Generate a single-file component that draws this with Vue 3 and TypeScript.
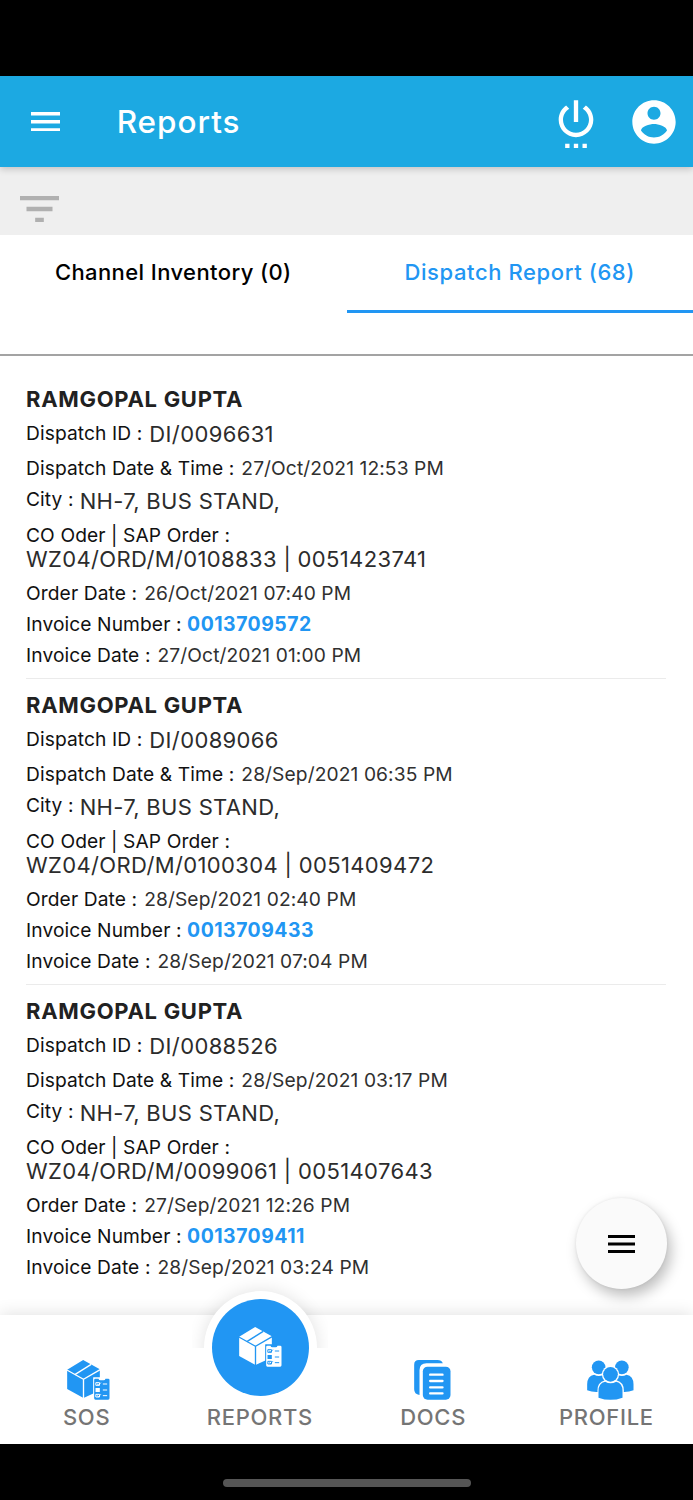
<script setup lang="ts">
interface DispatchRecord {
  name: string
  dispatchId: string
  dispatchedAt: string
  city: string
  orders: string
  orderDate: string
  invoice: string
  invoiceDate: string
}

const records: DispatchRecord[] = [
  {
    name: 'RAMGOPAL GUPTA',
    dispatchId: 'DI/0096631',
    dispatchedAt: '27/Oct/2021 12:53 PM',
    city: 'NH-7, BUS STAND,',
    orders: 'WZ04/ORD/M/0108833 | 0051423741',
    orderDate: '26/Oct/2021 07:40 PM',
    invoice: '0013709572',
    invoiceDate: '27/Oct/2021 01:00 PM',
  },
  {
    name: 'RAMGOPAL GUPTA',
    dispatchId: 'DI/0089066',
    dispatchedAt: '28/Sep/2021 06:35 PM',
    city: 'NH-7, BUS STAND,',
    orders: 'WZ04/ORD/M/0100304 | 0051409472',
    orderDate: '28/Sep/2021 02:40 PM',
    invoice: '0013709433',
    invoiceDate: '28/Sep/2021 07:04 PM',
  },
  {
    name: 'RAMGOPAL GUPTA',
    dispatchId: 'DI/0088526',
    dispatchedAt: '28/Sep/2021 03:17 PM',
    city: 'NH-7, BUS STAND,',
    orders: 'WZ04/ORD/M/0099061 | 0051407643',
    orderDate: '27/Sep/2021 12:26 PM',
    invoice: '0013709411',
    invoiceDate: '28/Sep/2021 03:24 PM',
  },
]

type NavIcon = 'box' | 'docs' | 'people'
interface NavItem {
  label: string
  icon: NavIcon
  active: boolean
}

const navItems: NavItem[] = [
  { label: 'SOS', icon: 'box', active: false },
  { label: 'REPORTS', icon: 'box', active: true },
  { label: 'DOCS', icon: 'docs', active: false },
  { label: 'PROFILE', icon: 'people', active: false },
]
</script>

<template>
  <div class="screen">
    <div class="status-bar"></div>

    <header class="app-bar">
      <svg class="menu-icon" viewBox="0 0 29.2 19.6" aria-hidden="true">
        <path d="M0 0h29.2v3.4H0zM0 8.1h29.2v3.4H0zM0 16.2h29.2v3.4H0z" />
      </svg>
      <h1 class="title">Reports</h1>
      <svg class="bar-icon" viewBox="0 0 24 24" aria-hidden="true">
        <path d="M7 24h2v-2H7v2zm4 0h2v-2h-2v2zm2-22h-2v10h2V2zm3.56 2.44l-1.45 1.45C16.84 6.94 18 8.83 18 11c0 3.31-2.69 6-6 6s-6-2.69-6-6c0-2.17 1.16-4.06 2.88-5.12L7.44 4.44C5.36 5.88 4 8.28 4 11c0 4.42 3.58 8 8 8s8-3.58 8-8c0-2.72-1.36-5.12-3.44-6.56zM15 24h2v-2h-2v2z" />
      </svg>
      <svg class="bar-icon" viewBox="0 0 24 24" aria-hidden="true">
        <path d="M12 2C6.48 2 2 6.48 2 12s4.48 10 10 10 10-4.48 10-10S17.52 2 12 2zm0 3c1.66 0 3 1.34 3 3s-1.34 3-3 3-3-1.34-3-3 1.34-3 3-3zm0 14.2c-2.5 0-4.71-1.28-6-3.22.03-1.99 4-3.08 6-3.08 1.99 0 5.97 1.09 6 3.08-1.29 1.94-3.5 3.22-6 3.22z" />
      </svg>
    </header>

    <div class="filter-bar">
      <svg class="filter-icon" viewBox="0 0 18 12" aria-hidden="true">
        <path d="M7 12h4v-2H7v2zM0 0v2h18V0H0zm3 7h12V5H3v2z" />
      </svg>
    </div>

    <nav class="tabs">
      <div class="tab">Channel Inventory (0)</div>
      <div class="tab selected">Dispatch Report (68)</div>
    </nav>

    <main class="records">
      <article v-for="record in records" :key="record.invoice" class="record">
        <div class="row name">{{ record.name }}</div>
        <div class="row id"><span class="label">Dispatch ID :</span><span class="big">{{ record.dispatchId }}</span></div>
        <div class="row when"><span class="label">Dispatch Date &amp; Time :</span><span class="value">{{ record.dispatchedAt }}</span></div>
        <div class="row city"><span class="label">City :</span><span class="big">{{ record.city }}</span></div>
        <div class="row order-label"><span class="label">CO Oder | SAP Order :</span></div>
        <div class="row orders"><span class="big">{{ record.orders }}</span></div>
        <div class="row order-date"><span class="label">Order Date :</span><span class="value">{{ record.orderDate }}</span></div>
        <div class="row"><span class="label">Invoice Number :</span><a class="invoice">{{ record.invoice }}</a></div>
        <div class="row"><span class="label">Invoice Date :</span><span class="value">{{ record.invoiceDate }}</span></div>
      </article>
    </main>

    <button class="fab" type="button" aria-label="Options">
      <svg class="fab-icon" viewBox="0 0 27 18" aria-hidden="true">
        <path d="M0 0h27v3H0zM0 7.5h27v3H0zM0 15h27v3H0z" />
      </svg>
    </button>

    <footer class="bottom-nav">
      <div v-for="item in navItems" :key="item.label" class="nav-item" :class="{ active: item.active }">
        <div v-if="item.active" class="hump"><div class="hump-circle"></div></div>
        <div v-if="item.active" class="disc"></div>
        <div class="icon-slot">
          <svg v-if="item.icon === 'box'" class="nav-icon box-icon" viewBox="82 58 128 120" aria-hidden="true">
            <path class="fill" d="M130 58l50 28v25h-18v47l-31 14-49-27V87z" />
            <path class="seam" d="M81 88l50 28 50-29M131 116v58" />
            <path class="seam" d="M105 102l49-31" />
            <path class="gap" d="M160 110h52v70h-52z" />
            <path class="fill" d="M167 114h9q1 5 6 5h9q5 0 6-5h8q4 0 4 4v55q0 4-4 4h-38q-4 0-4-4v-55q0-4 4-4z" />
            <path class="gap" d="M167 142h13v12h-13z" />
            <path class="detail" d="M168 126h11v8h-11zM172 130l4 3 7-7M168 161h11v8h-11zM172 165l4 3 7-7M189 130h13M189 148h13M189 165h13" />
          </svg>
          <svg v-else-if="item.icon === 'docs'" class="nav-icon docs-icon" viewBox="72 58 110 120" aria-hidden="true">
            <path class="fill" d="M86 58h56q12 0 16 10h-49q-21 0-21 21v74q-16-2-16-17V72q0-14 14-14z" />
            <rect class="fill" x="98" y="78" width="83" height="99" rx="14" />
            <path class="line" d="M120 102h37M120 121h37M120 140h37M120 158h37" />
          </svg>
          <svg v-else class="nav-icon people-icon" viewBox="110 58 140 120" aria-hidden="true">
            <circle class="fill" cx="144.500" cy="80" r="20.500" />
            <circle class="fill" cx="214" cy="80" r="20.500" />
            <path class="fill" d="M110 149v-18q0-25 21-29 14 8 28 0h42q13 8 27 0 21 4 21 29v18q-15 6-33 5h-74q-17 1-32-5z" />
            <circle class="gap" cx="180" cy="101" r="26" />
            <path class="gap" d="M141 178v-29q0-24 22-30h35q22 6 22 30v29z" />
            <circle class="fill" cx="180" cy="101" r="22" />
            <path class="fill" d="M144 171v-20q0-24 20-28 16 9 33 0 19 4 19 28v20q-36 13-72 0z" />
          </svg>
        </div>
        <span class="nav-label">{{ item.label }}</span>
      </div>
    </footer>

    <div class="gesture-area"><div class="home-indicator"></div></div>
  </div>
</template>

<style>
body {
  margin: 0;
}
</style>

<style scoped>
.screen {
  position: relative;
  display: flex;
  flex-direction: column;
  width: 693px;
  height: 1500px;
  overflow: hidden;
  background: #fff;
  color: #212121;
  font-family: Inter, "Liberation Sans", sans-serif;
  white-space: nowrap;
}

.status-bar {
  flex: none;
  height: 76px;
  background: #000;
}

.app-bar {
  position: relative;
  z-index: 1;
  flex: none;
  display: flex;
  align-items: center;
  box-sizing: border-box;
  height: 91px;
  padding: 0 13px 0 31px;
  background: #1ca9e2;
  box-shadow: 0 2px 7px rgba(0, 0, 0, 0.2);
}

.menu-icon {
  width: 29.2px;
  height: 19.6px;
  fill: #fff;
}

.title {
  flex: 1;
  margin: 0 0 0 56.5px;
  color: #fff;
  font-size: 31.5px;
  font-weight: 500;
  line-height: 40px;
  letter-spacing: 0.95px;
}

.bar-icon {
  width: 52px;
  height: 52px;
  fill: #fff;
}

.bar-icon + .bar-icon {
  margin-left: 26px;
}

.filter-bar {
  flex: none;
  box-sizing: border-box;
  height: 68px;
  padding: 29px 0 0 19.5px;
  background: #efefef;
}

.filter-icon {
  display: block;
  width: 39px;
  height: 26px;
  fill: #b0b0b0;
}

.tabs {
  flex: none;
  display: flex;
  align-items: flex-start;
  box-sizing: border-box;
  height: 121px;
  border-bottom: 2px solid #a3a3a3;
}

.tab {
  flex: 1;
  box-sizing: border-box;
  height: 78px;
  padding-top: 22px;
  border-bottom: 3px solid transparent;
  color: #000;
  font-size: 22px;
  font-weight: 500;
  line-height: 30px;
  letter-spacing: 0.4px;
  text-align: center;
}

.tab.selected {
  border-color: #2196f3;
  color: #2196f3;
  letter-spacing: 0.6px;
}

.records {
  flex: none;
  height: 959px;
  padding: 17px 27px 0 26px;
  box-sizing: border-box;
}

.record {
  box-sizing: border-box;
  height: 306px;
  padding-top: 10px;
  border-bottom: 1px solid #ebebeb;
}

.record:last-child {
  border-bottom-color: transparent;
}

.row {
  display: flex;
  align-items: center;
  height: 31px;
  line-height: 26px;
}

.label {
  margin-right: 7px;
  padding-top: 1px;
  color: #111;
  font-size: 19.2px;
  letter-spacing: 0.1px;
}

.value {
  padding-top: 1px;
  color: #303030;
  font-size: 19.2px;
  letter-spacing: 0.1px;
}

.big {
  color: #2c2c2c;
  font-size: 22px;
  letter-spacing: 0.36px;
}

.invoice {
  margin-left: -1.5px;
  color: #2196f3;
  font-size: 19.4px;
  font-weight: 700;
  letter-spacing: 0.5px;
}

.name {
  height: 32px;
  font-size: 22px;
  font-weight: 700;
  letter-spacing: 0.7px;
}

.id {
  height: 37px;
}

.id .label {
  padding: 0 0 2px;
}

.city .label {
  margin-right: 6px;
  padding: 0 0 4px;
}

.when {
  height: 32px;
}

.when .label,
.when .value {
  padding: 0;
}

.city {
  height: 34px;
}

.city .big {
  letter-spacing: 0.32px;
}

.order-label {
  height: 33px;
}

.orders {
  height: 15px;
}

.order-date {
  margin-top: 11px;
}

.fab {
  position: absolute;
  top: 1198px;
  left: 576px;
  display: flex;
  align-items: center;
  justify-content: center;
  width: 91px;
  height: 91px;
  padding: 0;
  border: 0;
  border-radius: 50%;
  background: #fafafa;
  box-shadow: 4px 7px 14px rgba(0, 0, 0, 0.26), 0 0 3px rgba(0, 0, 0, 0.08);
}

.fab-icon {
  width: 27px;
  height: 18px;
  fill: #000;
}

.bottom-nav {
  position: relative;
  flex: none;
  display: flex;
  height: 129px;
  background: #fff;
  box-shadow: 0 -1px 16px rgba(0, 0, 0, 0.12);
}

.nav-item {
  position: relative;
  flex: 1;
  display: flex;
  flex-direction: column;
  align-items: center;
}

.hump {
  position: absolute;
  top: -44px;
  left: 50%;
  width: 136px;
  height: 77px;
  margin-left: -67.5px;
  overflow: hidden;
}

.hump-circle {
  width: 113px;
  height: 113px;
  margin: 20px auto 0;
  border-radius: 50%;
  background: #fff;
  box-shadow: 0 0 18px rgba(0, 0, 0, 0.12);
}

.disc {
  position: absolute;
  top: -16px;
  left: 50%;
  width: 97px;
  height: 97px;
  margin-left: -48.2px;
  border-radius: 50%;
  background: #2196f3;
}

.icon-slot {
  position: relative;
  display: flex;
  align-items: center;
  justify-content: center;
  height: 40px;
  margin-top: 44.5px;
}

.active .icon-slot {
  margin-top: 12px;
  margin-bottom: 32.5px;
}

.nav-icon {
  height: 40px;
  fill: #2196f3;
  stroke: none;
}

.box-icon {
  width: 43px;
  margin-left: 4px;
}

.active .box-icon {
  width: 43px;
  margin-left: 0.5px;
}

.docs-icon {
  width: 37px;
  margin-right: 1.5px;
}

.people-icon {
  width: 47px;
  margin-left: 7.5px;
}

.active .fill {
  fill: #fff;
}

.gap {
  fill: #fff;
}

.active .gap {
  fill: #2196f3;
}

.seam,
.detail,
.line {
  fill: none;
  stroke: #fff;
  stroke-width: 4;
}

.detail {
  stroke-width: 3;
}

.active .seam,
.active .detail {
  stroke: #2196f3;
}

.line {
  stroke-width: 7;
  stroke-linecap: round;
}

.nav-label {
  margin-top: 2px;
  color: #757575;
  font-size: 22px;
  font-weight: 500;
  line-height: 30px;
  letter-spacing: 0.7px;
}

.gesture-area {
  position: relative;
  flex: none;
  display: flex;
  justify-content: center;
  height: 56px;
  background: #000;
}

.home-indicator {
  width: 248px;
  height: 8px;
  margin-top: 34.5px;
  border-radius: 4px;
  background: #555;
}
</style>
